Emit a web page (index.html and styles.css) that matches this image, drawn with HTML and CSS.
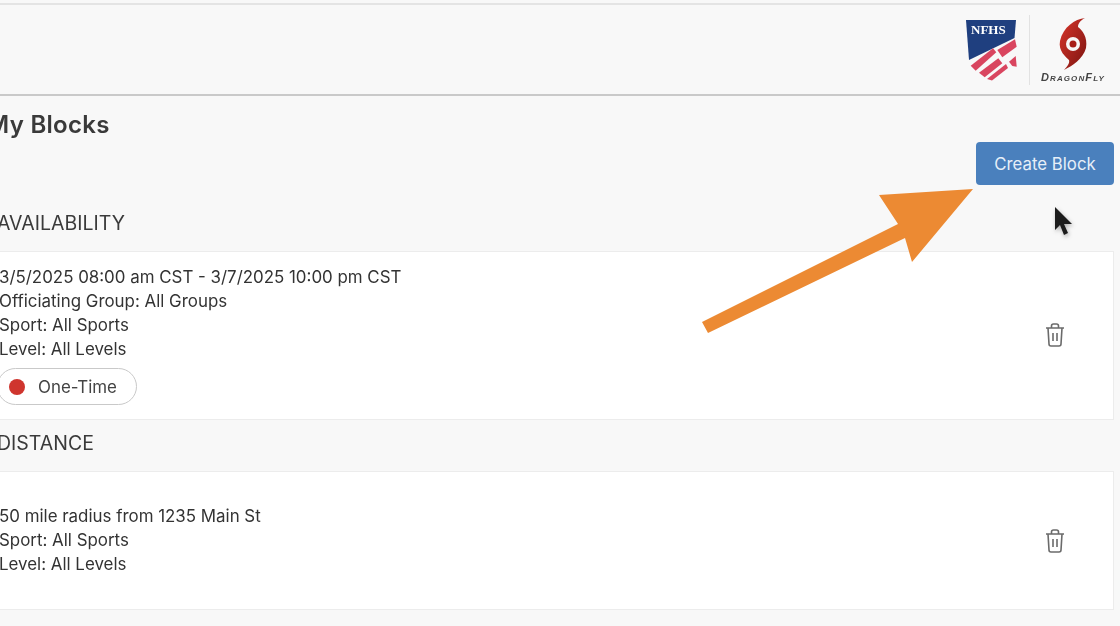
FILE: index.html
```html
<!DOCTYPE html>
<html lang="en">
<head>
    <meta charset="UTF-8">
    <title>My Blocks</title>
    <link rel="stylesheet" href="styles.css">
</head>
<body>

<header class="topbar">
    <svg class="logo-nfhs" width="52" height="62" viewBox="0 0 52 62">
        <path d="M1 1 H51 L49.5 19 L4 41 Z" fill="#1f3f7f"/>
        <text x="6" y="15" class="logo-nfhs-text">NFHS</text>
        <path d="M5.7 46.7 L28 29.3 L31.3 33.3 L10.7 51.7 Z" fill="#d9455f"/>
        <path d="M32.3 31 L50 20.3 L51.7 27.7 L37.3 38.3 Z" fill="#d9455f"/>
        <path d="M14 53.7 L33.3 39.3 L37.3 44.3 L19.7 58.3 Z" fill="#d9455f"/>
        <path d="M22 60 L41 45 L43 49 L27 61.5 Z" fill="#d9455f"/>
        <path d="M44 42.7 L50.7 37 L51.7 47.7 L47.3 47 Z" fill="#d9455f"/>
    </svg>
    <div class="logo-divider"></div>
    <div class="logo-df">
        <svg width="30" height="54" viewBox="0 0 30 54">
            <defs>
                <linearGradient id="storm" x1="0" y1="0" x2="1" y2="1">
                    <stop offset="0" stop-color="#d9352b"/>
                    <stop offset="1" stop-color="#7a1410"/>
                </linearGradient>
            </defs>
            <path d="M27 1 C17 2 5 10 2 24 C0 34 8 40 11 43 C12 46 9 50 6 53 C14 49 25 42 28 31 C30 20 24 13 20 10 C20 6 23 3 27 1 Z" fill="url(#storm)"/>
            <circle cx="15" cy="27" r="7" fill="#f7f7f7"/>
            <circle cx="15" cy="27" r="3.5" fill="#a81e18"/>
        </svg>
        <span class="logo-df-text">DragonFly</span>
    </div>
</header>

<main class="page">
    <div class="title-row">
        <h1>My Blocks</h1>
        <button class="create-btn">Create Block</button>
    </div>

    <h2 class="section-label section-first">AVAILABILITY</h2>
    <section class="block-card card-availability">
        <div class="block-info">
            <p>3/5/2025 08:00 am CST - 3/7/2025 10:00 pm CST</p>
            <p>Officiating Group: All Groups</p>
            <p>Sport: All Sports</p>
            <p>Level: All Levels</p>
            <span class="pill"><i class="pill-dot"></i>One-Time</span>
        </div>
        <svg class="trash" width="20" height="24" viewBox="0 0 20 24" fill="none" stroke="#6b6b6b" stroke-width="1.6">
            <path d="M1 5 H19 M3 5 L4 21 Q4 23 6 23 H14 Q16 23 16 21 L17 5 M6.5 5 V3 Q6.5 1 8.5 1 H11.5 Q13.5 1 13.5 3 V5 M8 10 V18 M12 10 V18"/>
        </svg>
    </section>

    <h2 class="section-label">DISTANCE</h2>
    <section class="block-card card-distance">
        <div class="block-info">
            <p>50 mile radius from 1235 Main St</p>
            <p>Sport: All Sports</p>
            <p>Level: All Levels</p>
        </div>
        <svg class="trash" width="20" height="24" viewBox="0 0 20 24" fill="none" stroke="#6b6b6b" stroke-width="1.6">
            <path d="M1 5 H19 M3 5 L4 21 Q4 23 6 23 H14 Q16 23 16 21 L17 5 M6.5 5 V3 Q6.5 1 8.5 1 H11.5 Q13.5 1 13.5 3 V5 M8 10 V18 M12 10 V18"/>
        </svg>
    </section>
</main>

<!-- annotation drawn over the page -->
<svg class="overlay" width="1120" height="626" viewBox="0 0 1120 626">
    <path d="M702 322 L898 224 L879 195 L973 189 L912 262 L905 238 L708 333 Z" fill="#ec8a33"/>
    <path class="cursor" d="M1055 207 L1055 230 L1060 225 L1064 235 L1068 233 L1064 224 L1072 224 Z" fill="#1c1c1c"/>
</svg>

</body>
</html>
```

FILE: styles.css
```css
html, body {
    margin: 0;
    height: 626px;
    overflow: hidden;
}
body {
    font-family: Inter, "Liberation Sans", sans-serif;
    background-color: #f8f8f8;
    color: #333;
    position: relative;
    padding-top: 3px;
    box-sizing: border-box;
    filter: blur(0.4px);
}
.topbar {
    height: 89px;
    border-top: 2px solid #e4e4e4;
    border-bottom: 2px solid #c9c9c9;
    display: flex;
    justify-content: flex-end;
    align-items: center;
    padding-right: 12px;
}
.logo-nfhs {
    margin-right: 12px;
}
.logo-nfhs-text {
    font-family: "Liberation Serif", serif;
    font-weight: bold;
    font-size: 13px;
    fill: #fff;
}
.logo-divider {
    width: 1px;
    height: 70px;
    background-color: #e2e2e2;
    margin-right: 8px;
}
.logo-df {
    display: flex;
    flex-direction: column;
    align-items: center;
    width: 70px;
}
.logo-df-text {
    font-family: "Liberation Sans", sans-serif;
    font-style: italic;
    font-weight: bold;
    font-variant: small-caps;
    font-size: 11px;
    color: #444;
    letter-spacing: 1.1px;
}
.page {
    margin-left: -7px;
    margin-right: 6px;
}
.title-row {
    height: 91px;
    position: relative;
}
h1 {
    margin: 0 0 0 -6px;
    padding-top: 14px;
    font-size: 24px;
    line-height: 30px;
    font-weight: 600;
    letter-spacing: 0.3px;
    color: #3a3a3a;
}
.create-btn {
    position: absolute;
    right: 0;
    top: 46px;
    width: 138px;
    height: 43px;
    background-color: #4a80bd;
    color: #e6eff8;
    border: none;
    border-radius: 4px;
    font-family: inherit;
    font-size: 16.8px;
}
.section-label {
    margin: 0;
    padding-left: 4px;
    height: 51px;
    line-height: 46px;
    font-size: 19.5px;
    font-weight: 400;
    color: #3a3a3a;
}
.section-first {
    height: 64px;
    line-height: 72px;
}
.block-card {
    background-color: #fff;
    border: 1px solid #ececec;
    display: flex;
    justify-content: space-between;
    align-items: center;
    padding: 0 48px 0 5px;
    box-sizing: border-box;
}
.card-availability {
    height: 169px;
}
.card-availability .trash {
    margin-bottom: 1px;
}
.card-distance {
    height: 139px;
}
.block-info {
    margin-bottom: 1px;
}
.block-info p {
    margin: 0;
    font-size: 16.9px;
    line-height: 24px;
    color: #333;
}
.pill {
    display: inline-flex;
    align-items: center;
    gap: 13px;
    height: 37px;
    width: 140px;
    box-sizing: border-box;
    margin: 7px 0 0 -2px;
    padding-left: 11px;
    border: 1px solid #c9c9c9;
    border-radius: 19px;
    font-size: 16.9px;
    color: #444;
}
.pill-dot {
    width: 16px;
    height: 16px;
    border-radius: 50%;
    background-color: #cf352e;
}
.overlay {
    position: absolute;
    left: 0;
    top: 0;
    pointer-events: none;
}
.cursor {
    filter: drop-shadow(1px 2px 2px rgba(0, 0, 0, 0.3));
}
```
